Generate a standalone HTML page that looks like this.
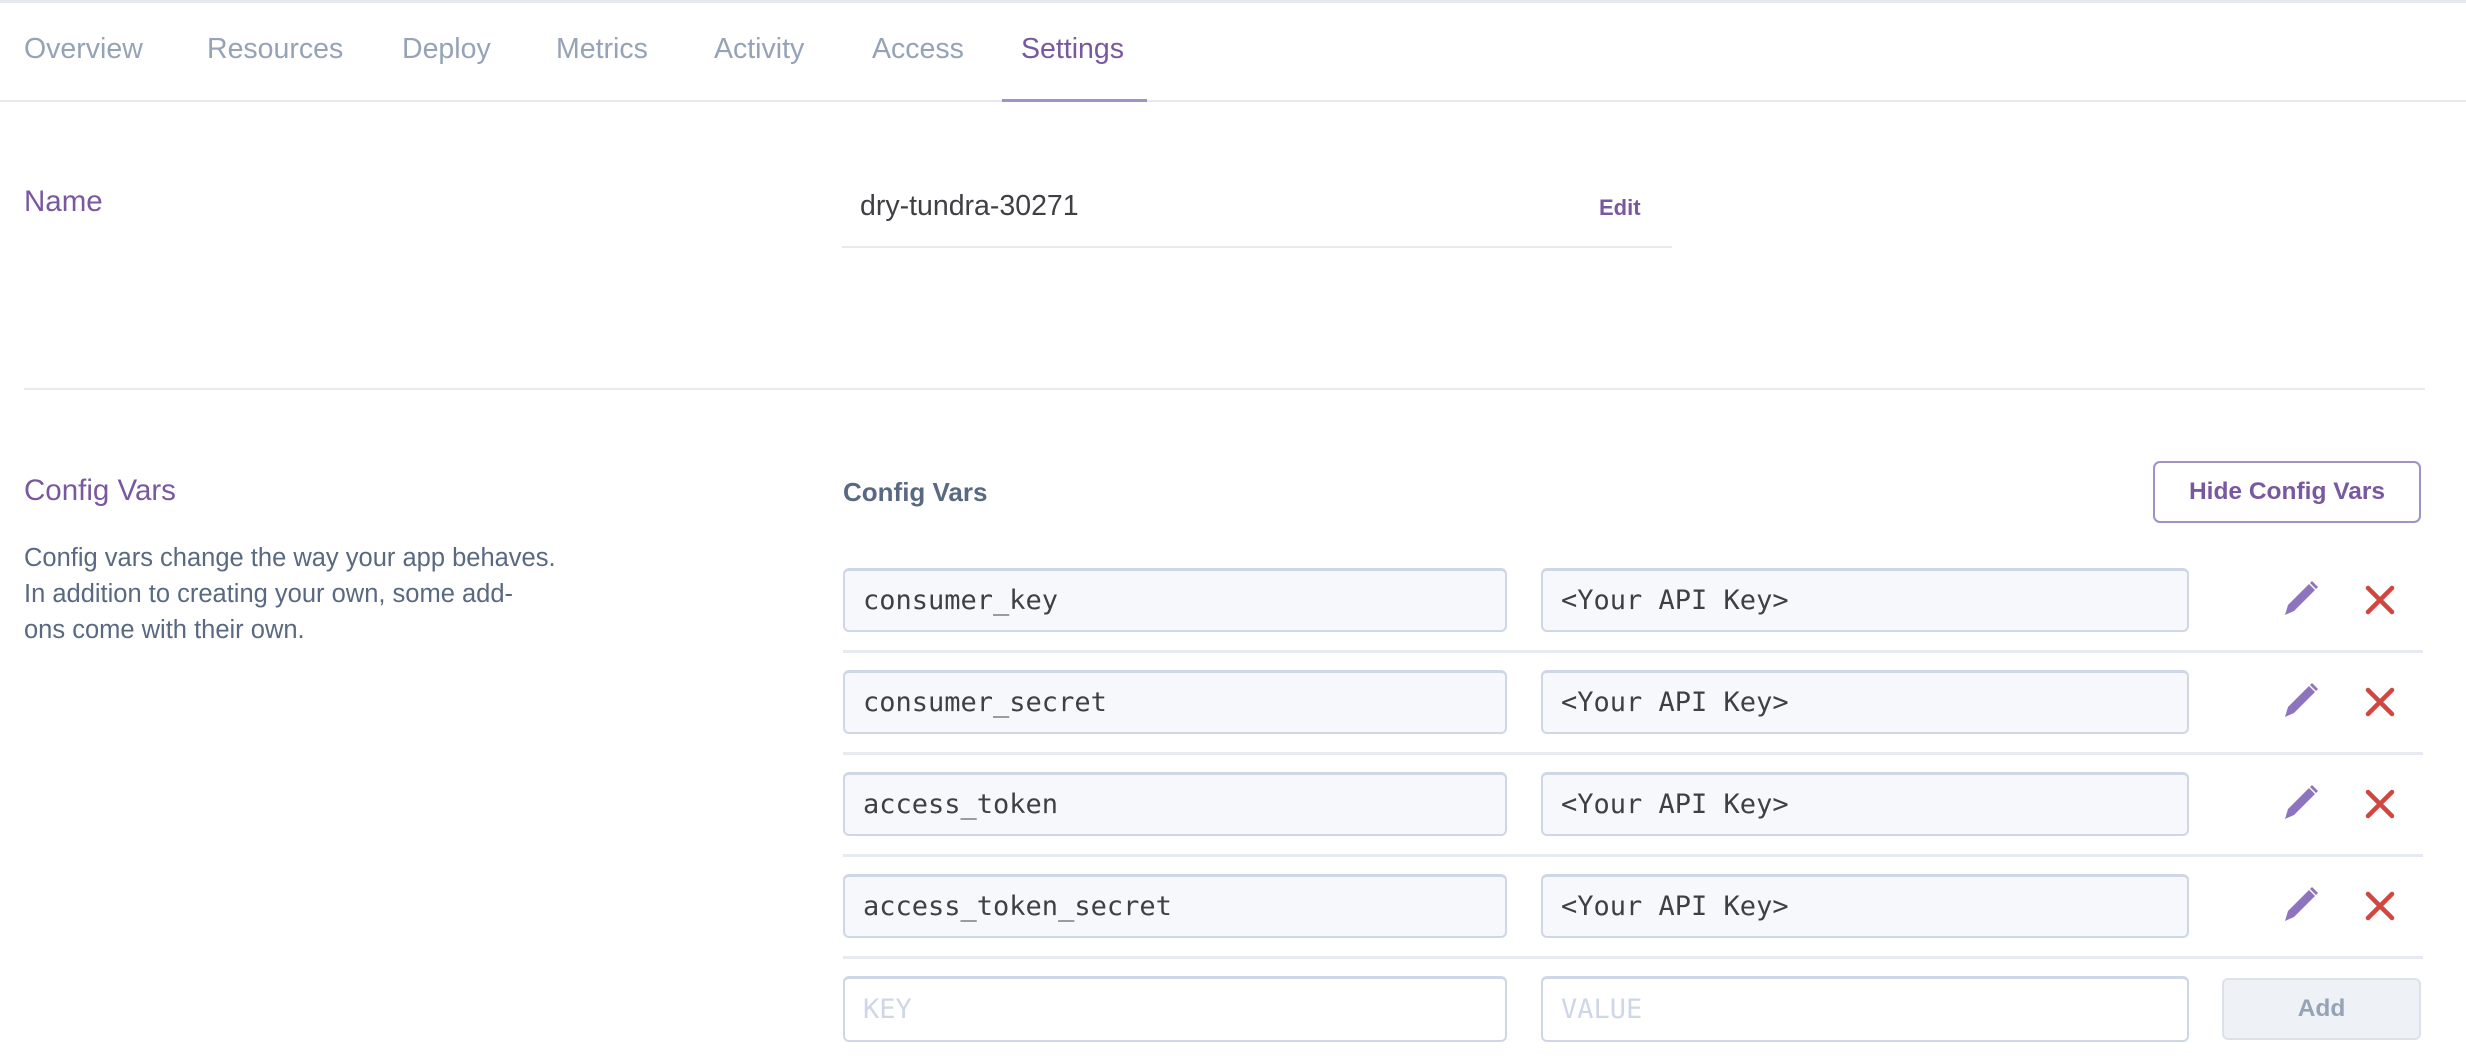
<!DOCTYPE html>
<html><head><meta charset="utf-8"><style>
body{margin:0;width:2466px;height:1058px;background:#fff;position:relative;overflow:hidden;font-family:"Liberation Sans",sans-serif;}
.a{position:absolute;white-space:nowrap}
.tab{position:absolute;top:29px;font-size:28.5px;color:#96a3b6;line-height:40px}
.box{position:absolute;height:64px;background:#f7f8fb;border:2px solid #cfd7e6;border-top-width:3px;border-radius:6px;box-sizing:border-box;font-family:"DejaVu Sans Mono","Liberation Mono",monospace;font-size:27px;color:#3f3f44;line-height:60px;padding-left:18px}
.sep{position:absolute;left:843px;width:1580px;height:3px;background:#e7eaf0}
</style></head><body>
<div class="a" style="left:0;top:0;width:2466px;height:3px;background:#e6e9ee"></div>
<div class="tab" style="left:24px">Overview</div>
<div class="tab" style="left:207px">Resources</div>
<div class="tab" style="left:402px">Deploy</div>
<div class="tab" style="left:556px">Metrics</div>
<div class="tab" style="left:714px">Activity</div>
<div class="tab" style="left:872px">Access</div>
<div class="tab" style="left:1021px;color:#79589f">Settings</div>
<div class="a" style="left:0;top:100px;width:2466px;height:2px;background:#e6e9f0"></div>
<div class="a" style="left:1002px;top:99px;width:145px;height:3px;background:#a092c2"></div>

<div class="a" style="left:24px;top:185px;font-size:29.5px;color:#79589f">Name</div>
<div class="a" style="left:860px;top:190px;font-size:28.5px;color:#3f3f44">dry-tundra-30271</div>
<div class="a" style="left:1599px;top:195px;font-size:22px;font-weight:bold;color:#79589f">Edit</div>
<div class="a" style="left:842px;top:246px;width:830px;height:2px;background:#e6e9ee"></div>

<div class="a" style="left:24px;top:388px;width:2401px;height:2px;background:#e7eaf0"></div>

<div class="a" style="left:24px;top:474px;font-size:29.5px;color:#79589f">Config Vars</div>
<div class="a" style="left:24px;top:540px;font-size:25.5px;color:#596981;line-height:36px;white-space:normal;width:620px">Config vars change the way your app behaves.<br>In addition to creating your own, some add-<br>ons come with their own.</div>
<div class="a" style="left:843px;top:477px;font-size:26px;font-weight:bold;color:#596981">Config Vars</div>
<div class="a" style="left:2153px;top:461px;width:268px;height:62px;box-sizing:border-box;border:2px solid #a192c4;border-radius:7px;text-align:center;line-height:58px;font-size:24.5px;font-weight:bold;color:#79589f">Hide Config Vars</div>

<div class="box" style="left:843px;top:568px;width:664px">consumer_key</div>
<div class="box" style="left:1541px;top:568px;width:648px">&lt;Your API Key&gt;</div>
<div class="sep" style="top:650px"></div>
<div class="box" style="left:843px;top:670px;width:664px">consumer_secret</div>
<div class="box" style="left:1541px;top:670px;width:648px">&lt;Your API Key&gt;</div>
<div class="sep" style="top:752px"></div>
<div class="box" style="left:843px;top:772px;width:664px">access_token</div>
<div class="box" style="left:1541px;top:772px;width:648px">&lt;Your API Key&gt;</div>
<div class="sep" style="top:854px"></div>
<div class="box" style="left:843px;top:874px;width:664px">access_token_secret</div>
<div class="box" style="left:1541px;top:874px;width:648px">&lt;Your API Key&gt;</div>
<div class="sep" style="top:956px"></div>
<div class="box" style="left:843px;top:976px;width:664px;height:66px;line-height:62px;background:#fff;color:#cfd7e6">KEY</div>
<div class="box" style="left:1541px;top:976px;width:648px;height:66px;line-height:62px;background:#fff;color:#cfd7e6">VALUE</div>
<div class="a" style="left:2222px;top:978px;width:199px;height:62px;box-sizing:border-box;background:#eef1f6;border:2px solid #dde2ea;border-radius:6px;text-align:center;line-height:58px;font-size:24.5px;font-weight:bold;color:#96a3b6">Add</div>

<svg class="a" style="left:0;top:0" width="2466" height="1058">
<defs>
<g id="pen"><path d="M0 30 L3 20 L24 -1 L30 5 L9 26 Z" fill="#8e74bf"/><path d="M25 -2 L27 -4 L33 2 L31 4 Z" fill="#8e74bf"/></g>
<g id="x"><path d="M2 2 L26 26 M26 2 L2 26" stroke="#d1463f" stroke-width="4.5" stroke-linecap="round"/></g>
</defs>
<use href="#pen" x="2285" y="585"/><use href="#x" x="2366" y="586"/>
<use href="#pen" x="2285" y="687"/><use href="#x" x="2366" y="688"/>
<use href="#pen" x="2285" y="789"/><use href="#x" x="2366" y="790"/>
<use href="#pen" x="2285" y="891"/><use href="#x" x="2366" y="892"/>
</svg>
</body></html>
